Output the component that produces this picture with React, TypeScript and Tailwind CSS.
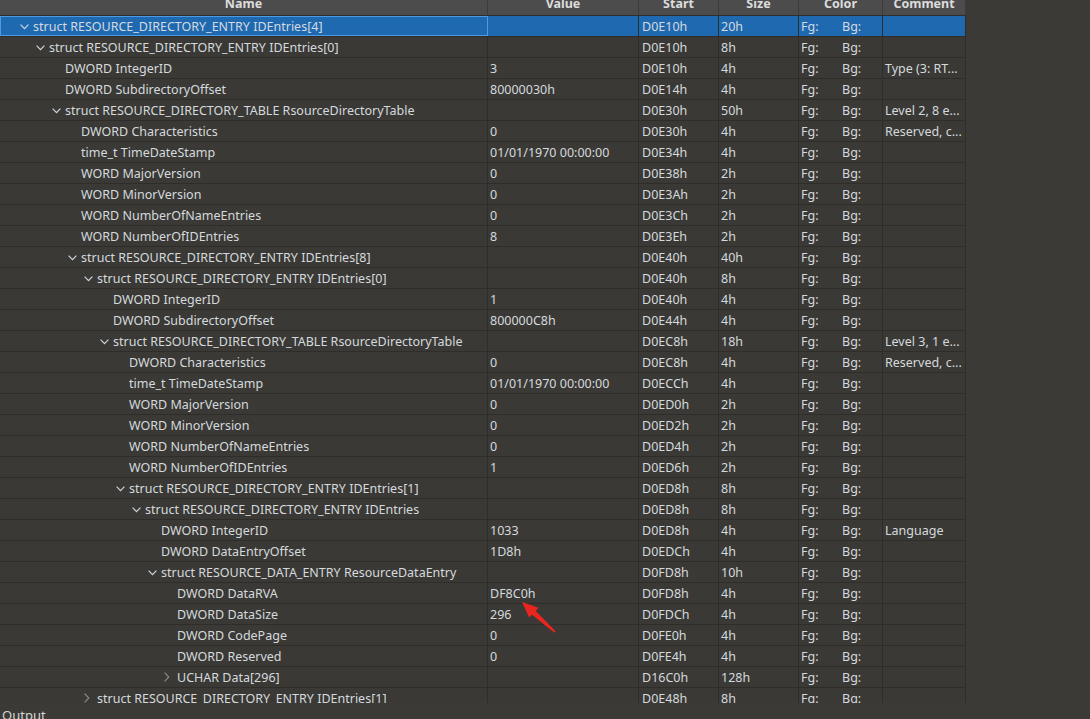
import React from "react";

type Row = {
  l: number;
  t: "o" | "c" | "f";
  n: string;
  v?: string;
  s: string;
  z: string;
  c?: string;
};

const rows: Row[] = [
  { l: 0, t: "o", n: "struct RESOURCE_DIRECTORY_ENTRY IDEntries[4]", s: "D0E10h", z: "20h" },
  { l: 1, t: "o", n: "struct RESOURCE_DIRECTORY_ENTRY IDEntries[0]", s: "D0E10h", z: "8h" },
  { l: 2, t: "f", n: "DWORD IntegerID", v: "3", s: "D0E10h", z: "4h", c: "Type (3: RT..." },
  { l: 2, t: "f", n: "DWORD SubdirectoryOffset", v: "80000030h", s: "D0E14h", z: "4h" },
  { l: 2, t: "o", n: "struct RESOURCE_DIRECTORY_TABLE RsourceDirectoryTable", s: "D0E30h", z: "50h", c: "Level 2, 8 e..." },
  { l: 3, t: "f", n: "DWORD Characteristics", v: "0", s: "D0E30h", z: "4h", c: "Reserved, c..." },
  { l: 3, t: "f", n: "time_t TimeDateStamp", v: "01/01/1970 00:00:00", s: "D0E34h", z: "4h" },
  { l: 3, t: "f", n: "WORD MajorVersion", v: "0", s: "D0E38h", z: "2h" },
  { l: 3, t: "f", n: "WORD MinorVersion", v: "0", s: "D0E3Ah", z: "2h" },
  { l: 3, t: "f", n: "WORD NumberOfNameEntries", v: "0", s: "D0E3Ch", z: "2h" },
  { l: 3, t: "f", n: "WORD NumberOfIDEntries", v: "8", s: "D0E3Eh", z: "2h" },
  { l: 3, t: "o", n: "struct RESOURCE_DIRECTORY_ENTRY IDEntries[8]", s: "D0E40h", z: "40h" },
  { l: 4, t: "o", n: "struct RESOURCE_DIRECTORY_ENTRY IDEntries[0]", s: "D0E40h", z: "8h" },
  { l: 5, t: "f", n: "DWORD IntegerID", v: "1", s: "D0E40h", z: "4h" },
  { l: 5, t: "f", n: "DWORD SubdirectoryOffset", v: "800000C8h", s: "D0E44h", z: "4h" },
  { l: 5, t: "o", n: "struct RESOURCE_DIRECTORY_TABLE RsourceDirectoryTable", s: "D0EC8h", z: "18h", c: "Level 3, 1 e..." },
  { l: 6, t: "f", n: "DWORD Characteristics", v: "0", s: "D0EC8h", z: "4h", c: "Reserved, c..." },
  { l: 6, t: "f", n: "time_t TimeDateStamp", v: "01/01/1970 00:00:00", s: "D0ECCh", z: "4h" },
  { l: 6, t: "f", n: "WORD MajorVersion", v: "0", s: "D0ED0h", z: "2h" },
  { l: 6, t: "f", n: "WORD MinorVersion", v: "0", s: "D0ED2h", z: "2h" },
  { l: 6, t: "f", n: "WORD NumberOfNameEntries", v: "0", s: "D0ED4h", z: "2h" },
  { l: 6, t: "f", n: "WORD NumberOfIDEntries", v: "1", s: "D0ED6h", z: "2h" },
  { l: 6, t: "o", n: "struct RESOURCE_DIRECTORY_ENTRY IDEntries[1]", s: "D0ED8h", z: "8h" },
  { l: 7, t: "o", n: "struct RESOURCE_DIRECTORY_ENTRY IDEntries", s: "D0ED8h", z: "8h" },
  { l: 8, t: "f", n: "DWORD IntegerID", v: "1033", s: "D0ED8h", z: "4h", c: "Language" },
  { l: 8, t: "f", n: "DWORD DataEntryOffset", v: "1D8h", s: "D0EDCh", z: "4h" },
  { l: 8, t: "o", n: "struct RESOURCE_DATA_ENTRY ResourceDataEntry", s: "D0FD8h", z: "10h" },
  { l: 9, t: "f", n: "DWORD DataRVA", v: "DF8C0h", s: "D0FD8h", z: "4h" },
  { l: 9, t: "f", n: "DWORD DataSize", v: "296", s: "D0FDCh", z: "4h" },
  { l: 9, t: "f", n: "DWORD CodePage", v: "0", s: "D0FE0h", z: "4h" },
  { l: 9, t: "f", n: "DWORD Reserved", v: "0", s: "D0FE4h", z: "4h" },
  { l: 9, t: "c", n: "UCHAR Data[296]", s: "D16C0h", z: "128h" },
  { l: 4, t: "c", n: "struct RESOURCE_DIRECTORY_ENTRY IDEntries[1]", s: "D0E48h", z: "8h" },
];

function Chevron({ t }: { t: "o" | "c" | "f" }) {
  if (t === "o")
    return (
      <svg width="9" height="6" viewBox="0 0 9 6" className="-mt-[1px]">
        <polyline points="0.6,0.6 4.5,4.6 8.4,0.6" fill="none" stroke="#cfd6de" strokeWidth="1.2" />
      </svg>
    );
  if (t === "c")
    return (
      <svg width="6" height="10" viewBox="0 0 6 10" className="-mt-[2px]">
        <polyline points="0.6,0.6 4.8,5 0.6,9.4" fill="none" stroke="#8e8e8e" strokeWidth="1.1" />
      </svg>
    );
  return null;
}

export default function App() {
  const font = { fontFamily: '"Noto Sans", "Open Sans", sans-serif' };
  return (
    <div
      className="relative w-[1090px] h-[719px] overflow-hidden bg-[#3b3a36] text-[#d5d9de] text-[12.5px] flex flex-col"
      style={font}
    >
      <div className="h-[703px] overflow-hidden flex flex-col shrink-0">
        {/* header */}
        <div className="h-[16px] shrink-0 overflow-hidden flex">
          <div className="flex w-[966px] h-[16px] bg-[#4c4c4c] border-b border-[#2f2e2c] overflow-hidden">
            {[
              ["Name", "w-[488px]"],
              ["Value", "w-[151px]"],
              ["Start", "w-[80px]"],
              ["Size", "w-[80px]"],
              ["Color", "w-[84px]"],
              ["Comment", "w-[83px]"],
            ].map(([h, w]) => (
              <div
                key={h}
                className={`${w} shrink-0 h-[21px] -mt-[6px] flex items-center justify-center font-bold text-[#dcdcdc] border-r border-[#3c3c3c]`}
              >
                {h}
              </div>
            ))}
          </div>
        </div>
        {/* rows */}
        {rows.map((r, i) => {
          const sel = i === 0;
          return (
            <div key={i} className="flex h-[21px] shrink-0">
              <div
                className={`flex w-[966px] h-[21px] border-b border-[#2e2d2a] ${sel ? "bg-[#1f69b1]" : "bg-[#3a3935]"}`}
              >
                <div
                  className={`w-[488px] shrink-0 flex items-center pt-[2px] whitespace-nowrap overflow-hidden ${
                    sel ? "border border-[#4b9be6]" : "border-r border-[#2e2d2a]"
                  }`}
                  style={{ paddingLeft: 20 + 16 * r.l - (sel ? 1 : 0) }}
                >
                  <span className="w-[13px] shrink-0 flex items-center">
                    <Chevron t={r.t} />
                  </span>
                  <span>{r.n}</span>
                </div>
                <div className="w-[151px] shrink-0 flex items-center pt-[2px] pl-[2px] border-r border-[#2e2d2a] whitespace-nowrap overflow-hidden">
                  {r.v ?? ""}
                </div>
                <div className="w-[80px] shrink-0 flex items-center pt-[2px] pl-[3px] border-r border-[#2e2d2a]">
                  {r.s}
                </div>
                <div className="w-[80px] shrink-0 flex items-center pt-[2px] pl-[2px] border-r border-[#2e2d2a]">
                  {r.z}
                </div>
                <div className="w-[84px] shrink-0 flex items-center pt-[2px] pl-[2px] border-r border-[#2e2d2a]">
                  <span className="w-[41px]">Fg:</span>
                  <span>Bg:</span>
                </div>
                <div className="w-[83px] shrink-0 flex items-center pt-[2px] pl-[2px] border-r border-[#2e2d2a] whitespace-nowrap overflow-hidden">
                  {r.c ?? ""}
                </div>
              </div>
            </div>
          );
        })}
      </div>
      <div className="pl-[2px] pt-[4px] text-[13px] leading-[16px] text-[#d5d5d5]">Output</div>

      {/* red annotation arrow */}
      <svg
        className="absolute left-[515px] top-[596px]"
        width="48"
        height="42"
        viewBox="0 0 48 42"
      >
        <polygon
          points="7,6 23.5,11.8 20.8,14.9 40.6,35.3 39.4,36.7 17.0,18.8 14.2,21.6"
          fill="#e8251f"
        />
      </svg>
    </div>
  );
}
